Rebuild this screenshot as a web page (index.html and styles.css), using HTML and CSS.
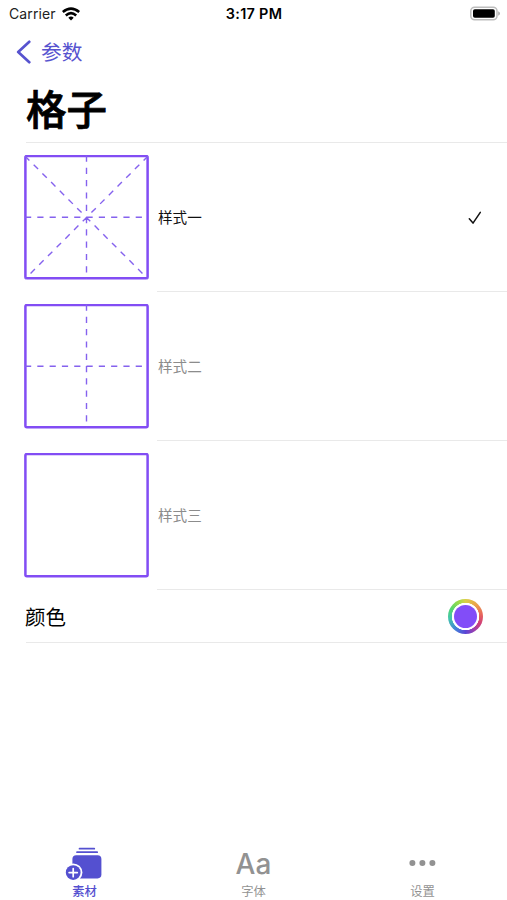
FILE: index.html
```html
<!DOCTYPE html>
<html lang="zh-CN">
<head>
<meta charset="utf-8">
<title>格子</title>
<link rel="stylesheet" href="styles.css">
</head>
<body>
<div class="screen">
  <header class="status">
    <div class="carrier">
      <span>Carrier</span>
      <svg width="18" height="14" viewBox="0 0 18 14" fill="none" stroke="#000" stroke-width="2.6">
        <path d="M.8 5Q9-1.9 17.2 5"/>
        <path d="M3.8 8.4Q9 3.9 14.2 8.4"/>
        <path d="M9 13.4L6.3 10.7Q9 8.5 11.7 10.7Z" fill="#000" stroke="none"/>
      </svg>
    </div>
    <div class="time">3:17 PM</div>
    <div class="battery">
      <svg width="32" height="16" viewBox="0 0 32 16">
        <rect x="1.8" y="1.2" width="26.2" height="12.6" rx="3.8" fill="#fff" stroke="#bdbdbd" stroke-width="1.5"/>
        <rect x="4" y="3.2" width="21.8" height="8.6" rx="1.8" fill="#000"/>
        <path d="M29.2 5.3Q31 6 31 7.5T29.2 9.7Z" fill="#adadad"/>
      </svg>
    </div>
  </header>
  <nav class="nav">
    <svg width="16" height="24" viewBox="0 0 16 24" fill="none" stroke="#5753cf" stroke-width="2.7" stroke-linecap="round" stroke-linejoin="round"><path d="M13.3 1.8L2.2 12L13.3 22.2"/></svg>
    <span>参数</span>
  </nav>
  <h1 class="title">格子</h1>
  <main class="list">
    <section class="row">
      <svg class="grid" viewBox="0 0 125 125">
        <rect class="frame" x="1.4" y="1" width="122.2" height="122.2" rx="1.5"/>
        <path class="dash" d="M62.5 .5V124M1 62.2H124M1 1L124 124M124 1L1 124"/>
      </svg>
      <div class="cell selected">
        <span>样式一</span>
        <svg class="check" width="14" height="14" viewBox="0 0 14 14" fill="none" stroke="#111" stroke-width="1.5" stroke-linecap="round" stroke-linejoin="round"><path d="M1.3 7.8L5 12.1L12.3 1.3"/></svg>
      </div>
    </section>
    <section class="row">
      <svg class="grid" viewBox="0 0 125 125">
        <rect class="frame" x="1.4" y="1" width="122.2" height="122.2" rx="1.5"/>
        <path class="dash" d="M62.5 .5V124M1 62.2H124"/>
      </svg>
      <div class="cell"><span>样式二</span></div>
    </section>
    <section class="row">
      <svg class="grid" viewBox="0 0 125 125">
        <rect class="frame" x="1.4" y="1" width="122.2" height="122.2" rx="1.5"/>
      </svg>
      <div class="cell"><span>样式三</span></div>
    </section>
    <section class="color-row">
      <span>颜色</span>
      <div class="wheel"><div class="swatch"></div></div>
    </section>
  </main>
  <footer class="tabs">
    <div class="tab active">
      <svg width="40" height="36" viewBox="0 0 40 36">
        <path d="M14.5 4.7H29.3M12 8.2H32.2" stroke="#5450d0" stroke-width="1.7" stroke-linecap="round"/>
        <rect x="7.4" y="11.2" width="29" height="23.2" rx="3.8" fill="#5450d0"/>
        <circle cx="8.2" cy="28.6" r="9.2" fill="#fff"/>
        <circle cx="8.2" cy="28.6" r="7.4" fill="#5450d0"/>
        <path d="M8.2 24.5V32.7M4.1 28.6H12.3" stroke="#fff" stroke-width="1.7" stroke-linecap="round"/>
      </svg>
      <span>素材</span>
    </div>
    <div class="tab">
      <div class="aa">Aa</div>
      <span>字体</span>
    </div>
    <div class="tab">
      <svg width="40" height="36" viewBox="0 0 40 36" fill="#929292"><circle cx="9.4" cy="19" r="3"/><circle cx="19.4" cy="19" r="3"/><circle cx="29.4" cy="19" r="3"/></svg>
      <span>设置</span>
    </div>
  </footer>
</div>
</body>
</html>
```
FILE: styles.css
```css
* { box-sizing: border-box; }
body {
  margin: 0;
  background: #fff;
  color: #000;
  font-family: Inter, "Noto Sans CJK SC", sans-serif;
}
svg { display: block; flex: none; }
.screen { height: 900px; display: flex; flex-direction: column; overflow: hidden; }
.status {
  height: 28px;
  display: grid;
  grid-template-columns: 1fr auto 1fr;
  align-items: center;
  padding: 0 6px 0 9px;
  font-size: 14px;
  line-height: 28px;
}
.carrier { display: flex; align-items: center; gap: 6px; color: #222; letter-spacing: .1px; }
.carrier svg { margin-top: -1px; }
.time { font-weight: 600; font-size: 14.4px; letter-spacing: .3px; margin-right: 2px; }
.battery { display: flex; justify-content: flex-end; }
.nav {
  height: 48px;
  display: flex;
  align-items: center;
  gap: 9px;
  padding-left: 16px;
  color: #5753cf;
  font-size: 20.7px;
}
.nav span { line-height: 46px; margin-top: 2px; }
.title {
  height: 66px;
  margin: 0;
  padding-left: 26px;
  font-size: 40.5px;
  line-height: 70px;
  font-weight: 500;
  -webkit-text-stroke: .8px #000;
}
.list { flex: 1; }
.list::before { content: ""; display: block; height: 1px; margin-left: 26px; background: #e9e9e9; }
.row { height: 149px; display: flex; padding-left: 24px; gap: 8px; }
.grid { width: 125px; height: 125px; margin-top: 12px; fill: none; stroke: #824df4; }
.frame { stroke-width: 2.5; }
.dash { stroke: #8562ee; stroke-width: 1.4; stroke-dasharray: 6.2 6.1; }
.cell {
  flex: 1;
  display: flex;
  align-items: center;
  justify-content: space-between;
  padding: 0 25px 0 1px;
  border-bottom: 1px solid #e9e9e9;
  color: #8c8c8c;
  font-size: 14.6px;
}
.cell span { margin-bottom: 2px; }
.check { margin-top: 2px; }
.selected { color: #111; }
.color-row {
  height: 53px;
  margin-left: 26px;
  padding-right: 24px;
  display: flex;
  align-items: center;
  justify-content: space-between;
  border-bottom: 1px solid #e9e9e9;
  font-size: 20.5px;
}
.color-row span { margin-left: -1px; }
.wheel {
  width: 35px;
  height: 35px;
  display: grid;
  place-items: center;
  border-radius: 50%;
  background: radial-gradient(circle, #fff 13.4px, transparent 14px),
    conic-gradient(#d9cf45, #eba04b 12%, #e7655c 23%, #cf3f78 32%, #9b3fae 41%, #5b45d6 50%, #437fd9 60%, #42c6ad 73%, #55d66f 83%, #9edb48 93%, #d9cf45);
}
.swatch { width: 23px; height: 23px; border-radius: 50%; background: #824df8; }
.tabs { height: 56px; display: grid; grid-template-columns: repeat(3, 1fr); }
.tab {
  display: flex;
  flex-direction: column;
  align-items: center;
  color: #929292;
  font-size: 12.3px;
  line-height: 20px;
}
.tab span { margin-top: 2px; }
.tab.active { color: #5450d0; font-weight: 500; }
.aa { height: 36px; line-height: 40px; font-size: 28px; font-weight: 500; }
```
